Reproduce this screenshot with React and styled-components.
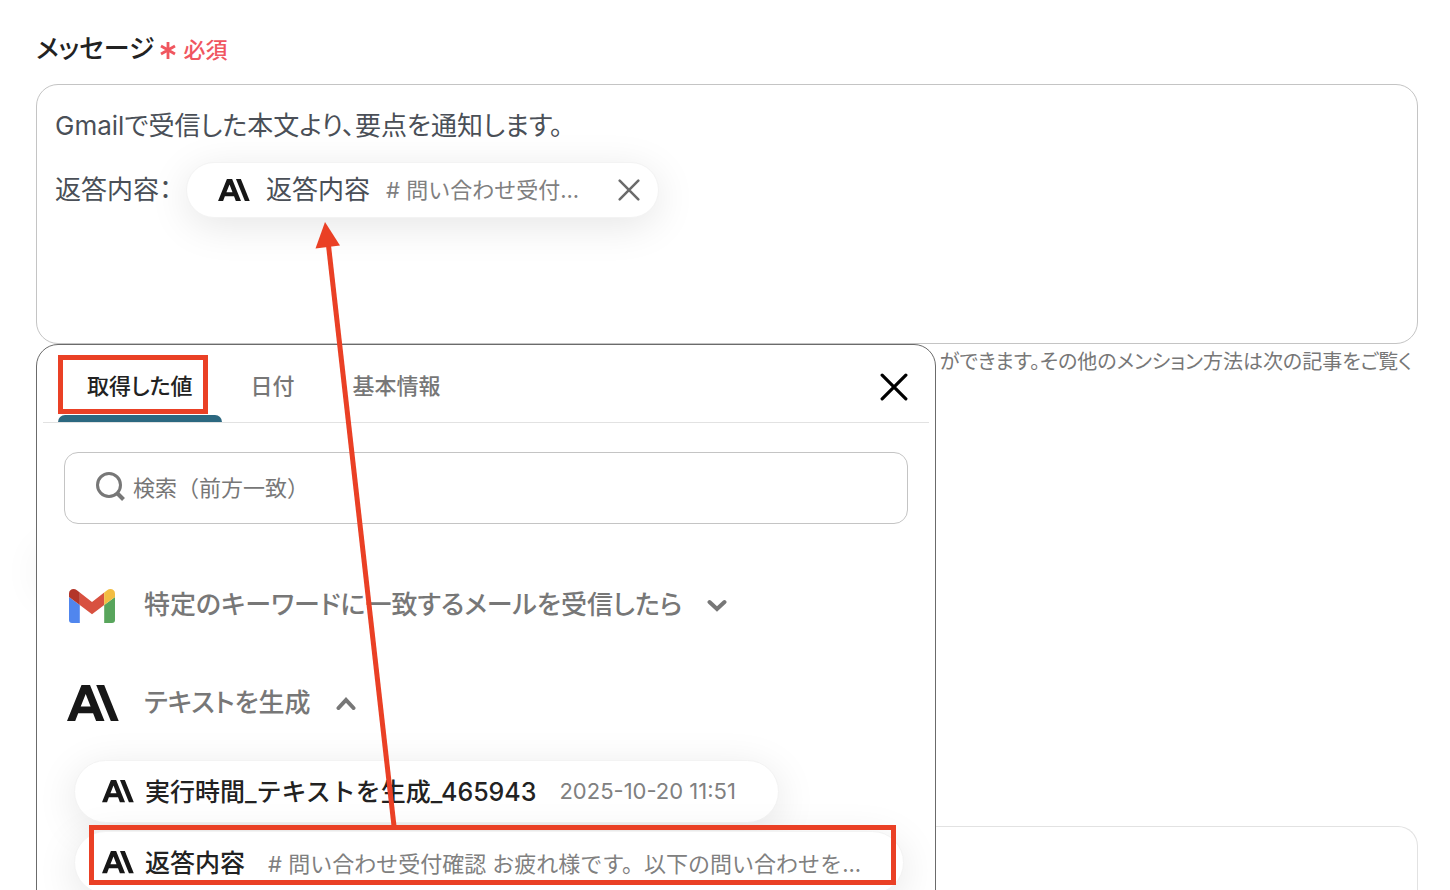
import { useState } from "react";
import { styled, createGlobalStyle } from "styled-components";

function AiLogo() {
  return (
    <svg viewBox="0 0 52 36" aria-hidden="true">
      <path fill="#171717" fillRule="evenodd" d="M14.500 0h8.500l14.500 36h-8.400l-3-7.800H11.200l-3 7.800H0zM13.700 21.500h9.900l-4.900-12.600z" />
      <path fill="#171717" d="M29.200 0h8l14.500 36h-7.900z" />
    </svg>
  );
}

function GmailLogo() {
  return (
    <svg viewBox="0 0 46 34" aria-hidden="true">
      <path fill="#5086ee" d="M0 8l10.800 8v18H3a3 3 0 0 1-3-3z" />
      <path fill="#58a55c" d="M35.200 16L46 8v23a3 3 0 0 1-3 3h-7.800z" />
      <path fill="#d85140" d="M10.800 3.600L23 13l12.200-9.400V16L23 25.200 10.800 16z" />
      <path fill="#b33529" d="M0 4.500C0 .6 4.500-1.300 7.900 1.200l2.900 2.400V16L0 8z" />
      <path fill="#f2bd42" d="M46 4.500c0-3.900-4.500-5.800-7.900-3.300l-2.900 2.400V16L46 8z" />
    </svg>
  );
}

function Cross({ size, weight }) {
  return (
    <svg width={size} height={size} viewBox="0 0 26 26" aria-hidden="true">
      <path d="M2 2l22 22M24 2L2 24" fill="none" stroke="currentColor" strokeWidth={weight} strokeLinecap="round" />
    </svg>
  );
}

function Chevron({ up }) {
  return (
    <svg width="20" height="14" viewBox="0 0 20 14" aria-hidden="true">
      <path d={up ? "M2.500 12l7.500-8 7.500 8" : "M2.500 4l7.500 7 7.500-7"} fill="none" stroke="currentColor" strokeWidth="4" strokeLinecap="round" />
    </svg>
  );
}

const tabs = ["取得した値", "日付", "基本情報"];

const outputs = [
  { name: "実行時間_テキストを生成_465943", value: "2025-10-20 11:51" },
  { name: "返答内容", value: "# 問い合わせ受付確認 お疲れ様です。以下の問い合わせを...", marked: true },
];

function App() {
  const [tab, setTab] = useState(tabs[0]);

  return (
    <Page>
      <GlobalStyle />
      <Label id="message-label">
        メッセージ
        <Required>
          <svg width="16" height="20" viewBox="0 0 16 20" aria-hidden="true">
            <path d="M8 3v17M1 7l14 8M15 7L1 15" stroke="currentColor" strokeWidth="2.800" />
          </svg>
          <span>必須</span>
        </Required>
      </Label>

      <Field>
        <Editor role="textbox" aria-multiline="true" aria-labelledby="message-label" contentEditable suppressContentEditableWarning>
          <Line>Gmailで受信した本文より、要点を通知します。</Line>
          <Line>
            返答内容：
            <Mention contentEditable={false}>
              <SmallLogo><AiLogo /></SmallLogo>
              <span>返答内容</span>
              <Value>{"# 問い合わせ受付..."}</Value>
              <RemoveButton aria-label="削除"><Cross size={22} weight={3} /></RemoveButton>
            </Mention>
          </Line>
        </Editor>

        <Help>ができます。その他のメンション方法は次の記事をご覧く</Help>
        <Backdrop />

        <Panel>
          <Tabs role="tablist">
            {tabs.map(name => (
              <Tab key={name} role="tab" aria-selected={tab === name} $active={tab === name} onClick={() => setTab(name)}>
                {name}
                {name === tabs[0] && <TabMark />}
              </Tab>
            ))}
            <CloseButton aria-label="閉じる"><Cross size={28} weight={3} /></CloseButton>
          </Tabs>

          <Search>
            <svg width="30" height="34" viewBox="0 0 30 34" aria-hidden="true">
              <circle cx="14" cy="14" r="11.500" fill="none" stroke="#777" strokeWidth="3" />
              <path d="M21.500 21.500l7 7" stroke="#777" strokeWidth="4" />
            </svg>
            <input type="text" placeholder="検索（前方一致）" aria-label="検索（前方一致）" />
          </Search>

          <Step aria-expanded="false">
            <StepLogo $narrow><GmailLogo /></StepLogo>
            <StepName>特定のキーワードに一致するメールを受信したら</StepName>
            <Chevron />
          </Step>
          <Step aria-expanded="true">
            <StepLogo><AiLogo /></StepLogo>
            <StepName>テキストを生成</StepName>
            <Chevron up />
          </Step>

          <Outputs>
            {outputs.map(output => (
              <Output key={output.name}>
                <SmallLogo><AiLogo /></SmallLogo>
                <OutputName>{output.name}</OutputName>
                <Value>{output.value}</Value>
                {output.marked && <OutputMark />}
              </Output>
            ))}
          </Outputs>
        </Panel>
      </Field>

      <NextCard />

      <Arrow width="100" height="610" viewBox="0 0 100 610" aria-hidden="true">
        <path d="M28 20L94 605" stroke="#ea4025" strokeWidth="5" />
        <path d="M25 1L15.500 27.500 40 24.500z" fill="#ea4025" />
      </Arrow>
    </Page>
  );
}

const GlobalStyle = createGlobalStyle`
  * {
    box-sizing: border-box;
  }

  body {
    margin: 0;
    background: #fff;
    font-family: Inter, "Noto Sans CJK JP", sans-serif;
  }

  button, input {
    font: inherit;
    color: inherit;
    background: none;
    border: none;
    padding: 0;
  }

  button {
    cursor: pointer;
  }

  svg {
    display: block;
    flex-shrink: 0;
  }
`;

const Page = styled.main`
  position: relative;
  display: flex;
  flex-direction: column;
  height: 100vh;
  padding: 28px 32px 0 36px;
  overflow: hidden;
`;

const Label = styled.div`
  display: flex;
  align-items: center;
  flex-shrink: 0;
  gap: 6px;
  height: 36px;
  margin-bottom: 20px;
  font-size: 26px;
  font-weight: 500;
  color: #222;
  font-feature-settings: "palt";
`;

const Required = styled.span`
  display: flex;
  align-items: center;
  gap: 7px;
  padding-top: 6px;
  font-size: 22px;
  color: #f0565f;
  font-feature-settings: normal;

  span {
    padding-bottom: 2px;
  }
`;

const Field = styled.div`
  position: relative;
  flex-shrink: 0;
`;

const Editor = styled.div`
  display: flex;
  flex-direction: column;
  gap: 16px;
  min-height: 260px;
  padding: 21px 18px;
  border: 1px solid #c4c4c4;
  border-radius: 22px;
  outline: none;
  font-size: 26px;
  line-height: 40px;
  color: #4a4f57;
  font-feature-settings: "palt";
`;

const Line = styled.div`
  display: flex;
  align-items: center;
  gap: 14px;
`;

const pill = `
  background: #fff;
  border: 1px solid #f3f3f3;
  box-shadow: 0 8px 40px rgba(0, 0, 0, 0.1);
`;

const Mention = styled.span`
  display: flex;
  align-items: center;
  gap: 16px;
  height: 56px;
  padding: 0 18px 0 31px;
  border-radius: 28px;
  ${pill}
`;

const SmallLogo = styled.span`
  width: 32px;
  flex-shrink: 0;
`;

const Value = styled.span`
  font-size: 22px;
  font-weight: 400;
  color: #808080;
  white-space: nowrap;
  font-feature-settings: normal;
`;

const RemoveButton = styled.button`
  margin-left: 23px;
  color: #6b6b6b;
`;

const Help = styled.p`
  margin: 4px 6px 0 0;
  text-align: right;
  font-size: 20px;
  line-height: 28px;
  color: #777;
  font-feature-settings: "palt";
`;

const Backdrop = styled.div`
  width: 400px;
  height: 56px;
  margin-top: 160px;
  border-radius: 28px;
  box-shadow: 0 8px 40px rgba(0, 0, 0, 0.06);
`;

const Panel = styled.section`
  position: absolute;
  top: 260px;
  left: 0;
  width: 900px;
  max-width: 100%;
  min-height: 640px;
  padding: 0 6px;
  background: #fff;
  border: 1px solid #6b6b6b;
  border-radius: 22px;
`;

const Tabs = styled.div`
  display: flex;
  height: 78px;
  padding: 0 21px 0 15px;
  border-bottom: 1px solid #e2e2e2;
`;

const Tab = styled.button`
  position: relative;
  padding: 0 29px;
  font-size: 22px;
  font-weight: 500;
  color: ${({ $active }) => ($active ? "#222" : "#777")};
  font-feature-settings: "palt";

  &::after {
    content: "";
    display: ${({ $active }) => ($active ? "block" : "none")};
    position: absolute;
    left: 0;
    right: 0;
    bottom: 0;
    height: 7px;
    border-radius: 7px 7px 0 0;
    background: #2c6880;
  }
`;

const TabMark = styled.span`
  position: absolute;
  top: 10px;
  left: 0;
  right: 14px;
  height: 59px;
  border: 5px solid #ea4025;
`;

const CloseButton = styled.button`
  margin: 6px 0 0 auto;
  color: #000;
`;

const Search = styled.label`
  display: flex;
  align-items: center;
  gap: 8px;
  height: 72px;
  margin: 29px 21px 32px;
  padding: 0 30px;
  border: 1px solid #c4c4c4;
  border-radius: 14px;
  font-size: 22px;
  color: #777;

  input {
    flex: 1;
    min-width: 0;
    outline: none;
  }

  input::placeholder {
    color: #777;
    opacity: 1;
  }
`;

const Step = styled.button`
  display: flex;
  align-items: center;
  gap: 25px;
  height: 98px;
  padding: 0 24px;
  font-size: 26px;
  font-weight: 500;
  color: #777;
  font-feature-settings: "palt";
`;

const StepLogo = styled.span`
  width: 52px;
  flex-shrink: 0;
  padding: ${({ $narrow }) => ($narrow ? "2px 4px 0 2px" : "0")};
`;

const StepName = styled.span`
  padding-bottom: 6px;
`;

const Outputs = styled.div`
  display: flex;
  flex-direction: column;
  align-items: flex-start;
  gap: 8px;
  margin-top: 8px;
  padding: 0 31px;
`;

const Output = styled.button`
  position: relative;
  display: flex;
  align-items: center;
  gap: 11px;
  height: 63px;
  padding: 0 42px 0 27px;
  border-radius: 32px;
  ${pill}

  ${Value} {
    margin-left: 12px;
    padding-bottom: 2px;
  }
`;

const OutputName = styled.span`
  padding-bottom: 3px;
  font-size: 25px;
  font-weight: 500;
  color: #222;
  white-space: nowrap;
`;

const OutputMark = styled.span`
  position: absolute;
  top: -7px;
  left: 14px;
  right: 7px;
  height: 60px;
  border: 5px solid #ea4025;
`;

const NextCard = styled.div`
  flex: 1 0 80px;
  margin-top: 234px;
  border: 1px solid #e2e2e2;
  border-bottom: none;
  border-radius: 20px 20px 0 0;
`;

const Arrow = styled.svg`
  position: absolute;
  top: 221px;
  left: 300px;
  pointer-events: none;
`;

export default App;
